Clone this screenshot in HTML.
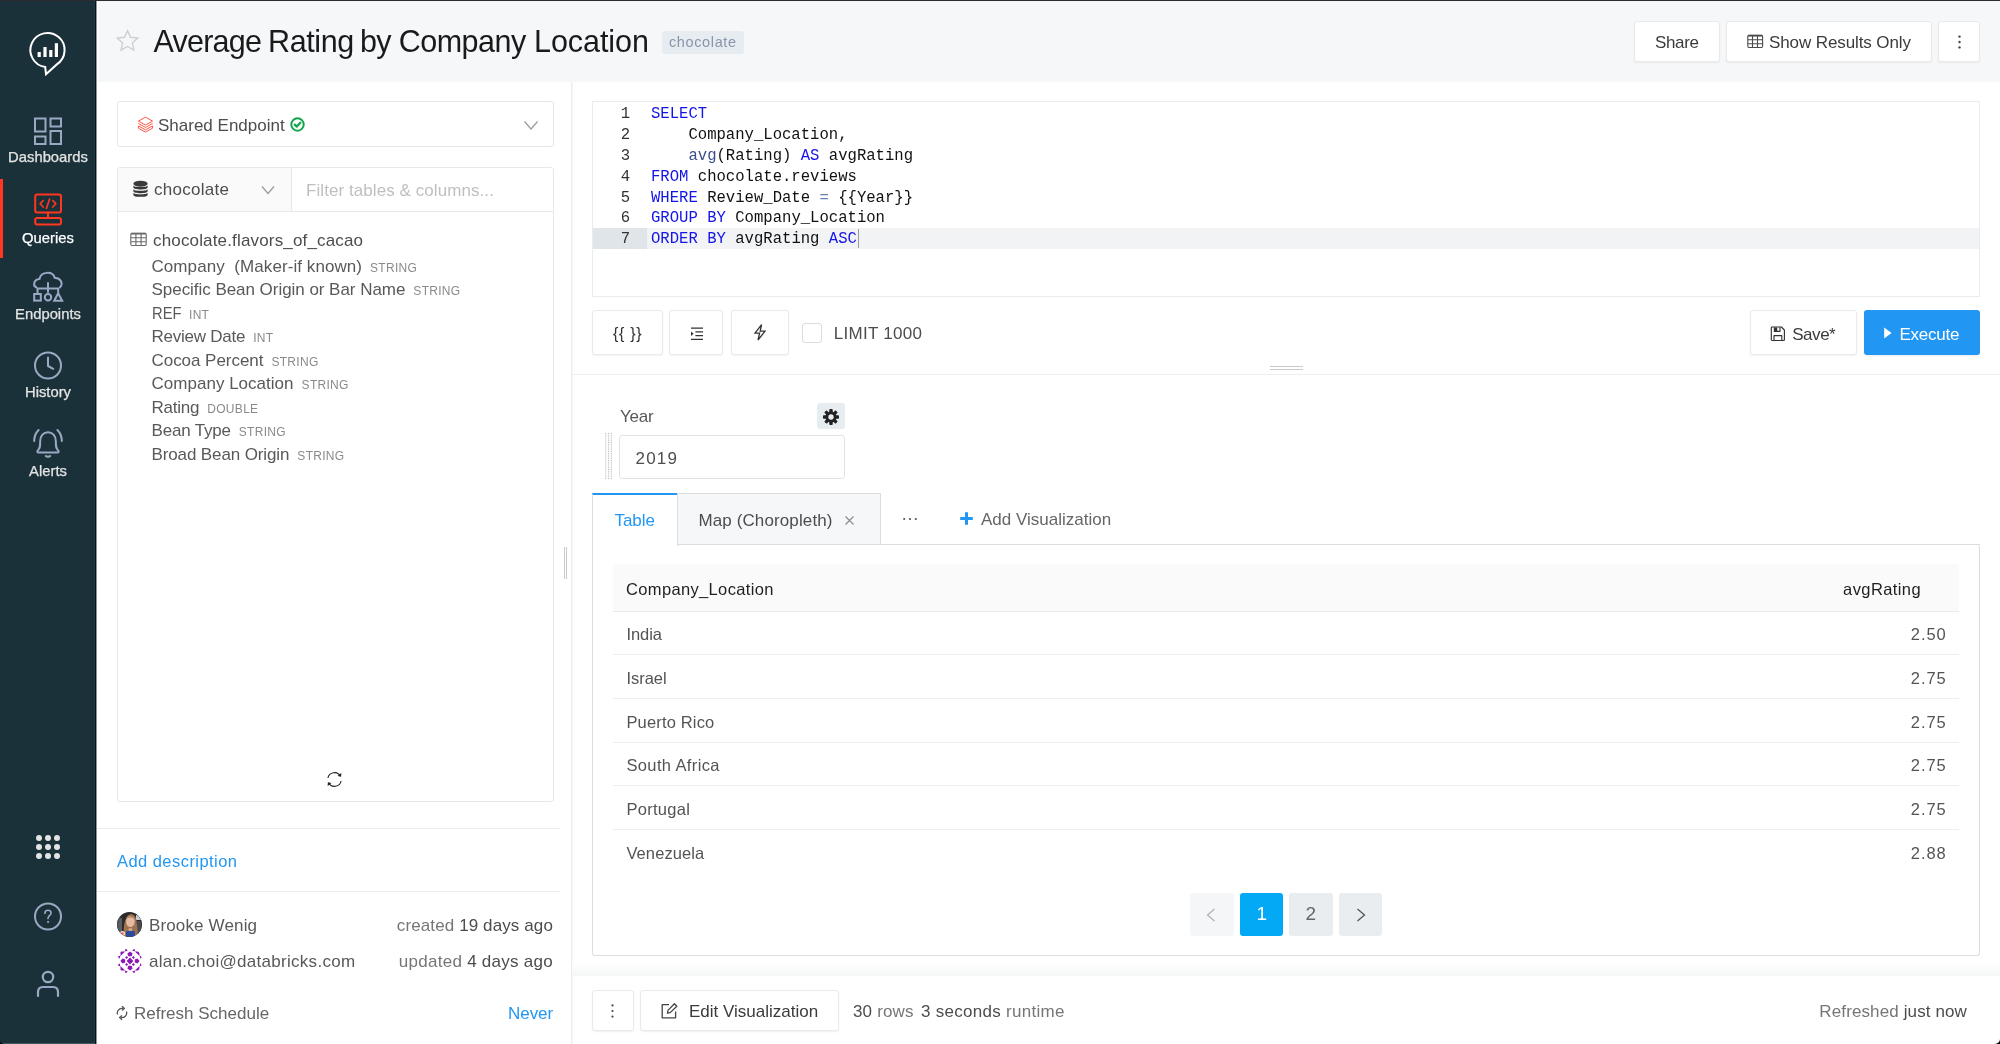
<!DOCTYPE html>
<html>
<head>
<meta charset="utf-8">
<title>Average Rating by Company Location</title>
<style>
*{box-sizing:border-box;margin:0;padding:0}
html,body{width:2000px;height:1044px;overflow:hidden;background:#fff}
body{will-change:transform;font-family:"Liberation Sans",sans-serif;color:#595959;position:relative;font-size:16px}
.abs{position:absolute}
.t{position:absolute;white-space:nowrap;line-height:1}
/* sidebar */
#side{position:absolute;left:0;top:0;width:97px;height:1044px;background:linear-gradient(90deg,#1b3139 0 94px,#23383f 94px 95px,#04121f 95px 96.4px,#8d979c 96.4px 97px)}
#side .lbl{position:absolute;left:0;width:96px;text-align:center;font-size:14.8px;-webkit-text-stroke:.25px currentColor;line-height:1;color:#e4e4e4;white-space:nowrap}
#topline{position:absolute;left:0;top:0;width:2000px;height:1px;background:#2b2d33;z-index:50}
/* header */
#hdr{position:absolute;left:98px;top:0;width:1902px;height:82px;background:#f6f7f9}
.btn{position:absolute;background:#fff;border:1px solid #eaeaea;border-radius:3px;box-shadow:0 1px 2px rgba(0,0,0,.06);color:#3b3b3b}
/* left */
.box{position:absolute;border:1px solid #e8e8e8;border-radius:3px;background:#fff}
.col{position:absolute;left:151.5px;font-size:17px;line-height:1;color:#595959;white-space:nowrap}
.col i{font-style:normal;font-size:12px;color:#8a8a8a;margin-left:8px;letter-spacing:.3px}
.hl{position:absolute;height:1px;background:#ececec}
/* editor */
.ln{position:absolute;left:593px;width:37px;text-align:right;font-family:"Liberation Mono",monospace;font-size:15.6px;line-height:21px;color:#333}
.cl{position:absolute;left:651px;font-family:"Liberation Mono",monospace;font-size:15.6px;line-height:21px;color:#111;white-space:pre}
.kw{color:#1414e6}
.fn{color:#3c4c8c}
.op{color:#687fb8}
/* table */
.tw{font-size:30.5px;color:#1a1a1a}
.ra,.rb{font-size:16.5px;color:#545454}
.row{position:absolute;left:613px;width:1346px;height:44px;border-bottom:1px solid #ebebeb}
.row .a{position:absolute;left:13px;top:13px;font-size:16px;line-height:1;color:#555;white-space:nowrap}
.row .b{position:absolute;right:13px;top:13px;font-size:16px;line-height:1;color:#555;white-space:nowrap}
</style>
</head>
<body>
<!-- HEADER -->
<div id="hdr"></div>
<svg class="abs" style="left:114px;top:27px" width="27" height="27" viewBox="0 0 27 27" fill="none"><path d="M13.5 3.6 L16.5 10.3 L23.8 11.1 L18.4 16 L19.9 23.2 L13.5 19.5 L7.1 23.2 L8.6 16 L3.2 11.1 L10.5 10.3 Z" stroke="#cfcfcf" stroke-width="1.4" stroke-linejoin="miter"/></svg>
<div class="t tw" id="tw1" style="left:153.6px;top:26px;letter-spacing:-0.8px">Average</div><div class="t tw" id="tw2" style="left:268px;top:26px;letter-spacing:-0.38px">Rating</div><div class="t tw" id="tw3" style="left:360px;top:26px;letter-spacing:-0.7px">by</div><div class="t tw" id="tw4" style="left:398.7px;top:26px;letter-spacing:-0.5px">Company</div><div class="t tw" id="tw5" style="left:534px;top:26px;letter-spacing:-0.05px">Location</div>
<div class="abs" style="left:662px;top:31px;width:82px;height:23px;background:#e7ecf1;border-radius:3px"></div>
<div class="t" id="tag" style="left:669px;top:35px;font-size:14.5px;color:#8795ab;letter-spacing:0.62px">chocolate</div>
<div class="btn" style="left:1634px;top:21px;width:86px;height:41px"></div>
<div class="t" id="share" style="left:1655px;top:34px;font-size:17px;color:#3b3b3b;letter-spacing:-0.34px">Share</div>
<div class="btn" style="left:1726px;top:21px;width:206px;height:41px"></div>
<svg class="abs" style="left:1747px;top:34px" width="17" height="15" viewBox="0 0 17 15" fill="none" stroke="#4a4a4a" stroke-width="1.1"><rect x=".8" y="1.3" width="14.8" height="12.2" rx="1.2"/><path d="M.8 5.8H15.6M.8 9.7H15.6M5.5 1.3V13.5M10.5 1.3V13.5"/><path d="M1 1.7H15.4" stroke-width="1.7"/></svg>
<div class="t" id="sro" style="left:1769px;top:34px;font-size:17px;color:#3b3b3b;letter-spacing:-0.1px">Show Results Only</div>
<div class="btn" style="left:1938px;top:21px;width:42px;height:41px"></div>
<svg class="abs" style="left:1957px;top:34px" width="5" height="16" viewBox="0 0 5 16" fill="#444"><circle cx="2.5" cy="2.6" r="1.2"/><circle cx="2.5" cy="8" r="1.2"/><circle cx="2.5" cy="13.4" r="1.2"/></svg>
<!-- LEFT PANEL -->
<div class="abs" style="left:571px;top:82px;width:1px;height:962px;background:#ececee"></div><div class="abs" style="left:572px;top:82px;width:1px;height:962px;background:#f7f7f8"></div>
<div class="box" style="left:117px;top:101px;width:437px;height:46px"></div>
<svg class="abs" style="left:137px;top:116px" width="17" height="17" viewBox="0 0 17 17" fill="none" stroke="#ff5a47" stroke-width="1" stroke-linejoin="round"><path d="M8.5 1.2 L15.6 5.1 L8.5 9 L1.4 5.1 Z"/><path d="M1.4 7.5 L8.5 11.4 L15.6 7.5 M1.4 9.9 L8.5 13.8 L15.6 9.9 M1.4 12.2 L8.5 16.1 L15.6 12.2 M1.4 9.9V12.2 M15.6 9.9V12.2"/></svg>
<div class="t" id="sep" style="left:158px;top:117px;font-size:17px;color:#4d4d4d">Shared Endpoint</div>
<svg class="abs" style="left:289px;top:116px" width="17" height="17" viewBox="0 0 17 17" fill="none" stroke="#10a54a" stroke-width="2" stroke-linecap="round" stroke-linejoin="round"><circle cx="8.5" cy="8.5" r="6.2"/><path d="M5.8 8.6 L7.8 10.6 L11.3 6.7" stroke-width="2.2"/></svg>
<svg class="abs" style="left:522px;top:118px" width="18" height="14" viewBox="0 0 18 14" fill="none" stroke="#9a9a9a" stroke-width="1.2"><path d="M2.5 3.5 L9 11 L15.5 3.5"/></svg>
<div class="box" style="left:117px;top:167px;width:437px;height:635px"></div>
<div class="abs" style="left:118px;top:168px;width:174px;height:43px;background:#fafafa;border-right:1px solid #e8e8e8"></div>
<div class="abs" style="left:118px;top:211px;width:435px;height:1px;background:#e8e8e8"></div>
<svg class="abs" style="left:132px;top:180px" width="17" height="18" viewBox="0 0 17 18" fill="#3a3a3a"><ellipse cx="8.5" cy="3.7" rx="7.1" ry="3"/><path d="M1.4 5.2 C1.4 7.7 15.6 7.7 15.6 5.2 V7.5 C15.6 10.1 1.4 10.1 1.4 7.5 Z M1.4 8.9 C1.4 11.4 15.6 11.4 15.6 8.9 V11.2 C15.6 13.8 1.4 13.8 1.4 11.2 Z M1.4 12.6 C1.4 15.1 15.6 15.1 15.6 12.6 V14.9 C15.6 17.5 1.4 17.5 1.4 14.9 Z"/></svg>
<div class="t" id="choc" style="left:154px;top:181px;font-size:17px;color:#4d4d4d;letter-spacing:0.28px">chocolate</div>
<svg class="abs" style="left:259px;top:183px" width="18" height="14" viewBox="0 0 18 14" fill="none" stroke="#9a9a9a" stroke-width="1.2"><path d="M3 3.5 L9 10.5 L15 3.5"/></svg>
<div class="t" id="filt" style="left:306px;top:182px;font-size:17px;color:#bfbfbf;letter-spacing:0.07px">Filter tables &amp; columns...</div>
<svg class="abs" style="left:130px;top:232px" width="17" height="15" viewBox="0 0 17 15" fill="none" stroke="#6a6a6a" stroke-width="1.1"><rect x=".8" y="1.3" width="15.4" height="12.2" rx="1.2"/><path d="M.8 5.8H16.2M.8 9.7H16.2M5.9 1.3V13.5M11.1 1.3V13.5"/><path d="M1 1.7H16" stroke-width="1.7"/></svg>
<div class="t" id="tbl" style="left:153px;top:232px;font-size:17px;color:#4d4d4d;letter-spacing:0.16px">chocolate.flavors_of_cacao</div>
<div class="col" style="top:258px"><span style="letter-spacing:0.07px">Company&nbsp; (Maker-if known)</span><i>STRING</i></div>
<div class="col" style="top:281px"><span style="letter-spacing:-0.04px">Specific Bean Origin or Bar Name</span><i>STRING</i></div>
<div class="col" style="top:305px"><span style="display:inline-block;transform:scaleX(.868);transform-origin:0 50%;margin-right:-4.5px">REF</span><i>INT</i></div>
<div class="col" style="top:328px"><span style="letter-spacing:-0.24px">Review Date</span><i>INT</i></div>
<div class="col" style="top:352px"><span style="letter-spacing:-0.04px">Cocoa Percent</span><i>STRING</i></div>
<div class="col" style="top:375px"><span style="letter-spacing:0.02px">Company Location</span><i>STRING</i></div>
<div class="col" style="top:399px"><span style="letter-spacing:-0.23px">Rating</span><i>DOUBLE</i></div>
<div class="col" style="top:422px"><span style="letter-spacing:-0.19px">Bean Type</span><i>STRING</i></div>
<div class="col" style="top:446px"><span style="letter-spacing:-0.12px">Broad Bean Origin</span><i>STRING</i></div>
<svg class="abs" style="left:325px;top:770px" width="19" height="19" viewBox="0 0 19 19" fill="none" stroke="#222" stroke-width="1.1"><path d="M2.9 8 A6.7 6.7 0 0 1 15.4 6.2 M16.1 11 A6.7 6.7 0 0 1 3.6 12.8"/><path d="M16.2 3.4 L15.8 6.6 L12.8 5.6 Z M2.8 15.6 L3.2 12.4 L6.2 13.4 Z" fill="#222" stroke-width=".4"/></svg>
<div class="hl" style="left:97px;top:828px;width:463px"></div>
<div class="t" id="adddesc" style="left:117px;top:853px;font-size:16.5px;color:#2196f3;letter-spacing:0.45px">Add description</div>
<div class="hl" style="left:97px;top:891px;width:463px"></div>
<div class="abs" style="left:116.8px;top:911.8px;width:25.4px;height:25.4px;border-radius:50%;overflow:hidden"><svg style="display:block;margin:-.3px 0 0 -.3px" width="26" height="26" viewBox="0 0 26 26"><g><rect width="26" height="26" fill="#2a2a2c"/><rect x="0" y="6" width="5" height="14" fill="#5b5d62"/><rect x="19" y="3" width="5" height="5" fill="#c9ccd2"/><rect x="20" y="9" width="4" height="14" fill="#4a4a4e"/><path d="M7.4 26 C5.8 18 7 7 11.4 3 C15 1 19 3.4 19.6 9 C20 15 21.6 20 20.2 26 Z" fill="#9c7250"/><ellipse cx="13.4" cy="9.6" rx="4.3" ry="5.4" fill="#e6b9a2"/><path d="M9.8 6.5 C11 3 16 3 17.2 7 C15 5.5 12 5.4 9.8 6.5Z" fill="#c08f6a"/><path d="M9 26 V20 C10.5 17.6 16.5 17.6 18 20 V26 Z" fill="#2b4a9c"/><path d="M11.6 16.2 H15.2 V19 H11.6 Z" fill="#dca58c"/><circle cx="5.4" cy="21.6" r="2.6" fill="#f3e6e2"/><circle cx="5.4" cy="21.6" r="1.3" fill="#e8604f"/></g><circle cx="13" cy="13" r="12.4" fill="none" stroke="#3a3a3c" stroke-opacity=".55" stroke-width=".8"/></svg></div>
<div class="t" id="bw" style="left:149px;top:917px;font-size:17px;color:#595959;letter-spacing:0.14px">Brooke Wenig</div>
<div class="t" id="cr" style="right:1447px;top:917px;font-size:17px;color:#767676;letter-spacing:0.11px">created <span style="color:#4d4d4d">19 days ago</span></div>
<div class="abs" style="left:116.7px;top:948.2px;width:25.6px;height:25.6px;border-radius:50%;overflow:hidden"><svg style="display:block;margin:-.2px 0 0 -.2px" width="26" height="26" viewBox="0 0 26 26"><g fill="#8a17b6"><rect width="26" height="26" fill="#fff"/><path d="M13 9.6 L16.4 13 L13 16.4 L9.6 13 Z"/><path d="M9.6 8.1 l1.5 1.5 l-1.5 1.5 l-1.5 -1.5 Z"/><path d="M16.4 8.1 l1.5 1.5 l-1.5 1.5 l-1.5 -1.5 Z"/><path d="M9.6 14.9 l1.5 1.5 l-1.5 1.5 l-1.5 -1.5 Z"/><path d="M16.4 14.9 l1.5 1.5 l-1.5 1.5 l-1.5 -1.5 Z"/><path d="M13 3.4 l2.6 2.2 l-1 2.6 h-3.2 l-1 -2.6 Z"/><path d="M13 22.6 l2.6 -2.2 l-1 -2.6 h-3.2 l-1 2.6 Z"/><path d="M3.4 13 l2.2 -2.6 l2.6 1 v3.2 l-2.6 1 Z"/><path d="M22.6 13 l-2.2 -2.6 l-2.6 1 v3.2 l2.6 1 Z"/><path d="M3.5 3.5 h4.6 l-4.6 4.6 Z M22.5 3.5 h-4.6 l4.6 4.6 Z M3.5 22.5 h4.6 l-4.6 -4.6 Z M22.5 22.5 h-4.6 l4.6 -4.6 Z"/><path d="M8.6 0.6 l2.2 2 l-3 .8 Z M17.4 0.6 l-2.2 2 l3 .8 Z M8.6 25.4 l2.2 -2 l-3 -.8 Z M17.4 25.4 l-2.2 -2 l3 -.8 Z M0.6 8.6 l2 2.2 l.8 -3 Z M0.6 17.4 l2 -2.2 l.8 3 Z M25.4 8.6 l-2 2.2 l-.8 -3 Z M25.4 17.4 l-2 -2.2 l-.8 3 Z"/></g></svg></div>
<div class="t" id="ac" style="left:149px;top:953px;font-size:17px;color:#595959;letter-spacing:0.28px">alan.choi@databricks.com</div>
<div class="t" id="up" style="right:1447px;top:953px;font-size:17px;color:#767676;letter-spacing:0.27px">updated <span style="color:#4d4d4d">4 days ago</span></div>
<svg class="abs" style="left:115px;top:1005px" width="14" height="16" viewBox="0 0 14 16" fill="none" stroke="#555" stroke-width="1.3"><path d="M2.6 9.6 A4.6 4.6 0 0 1 7 3.4 H8 M11.4 6.4 A4.6 4.6 0 0 1 7 12.6 H6"/><path d="M7 1.2 L9.4 3.4 L7 5.6 M7 10.4 L4.6 12.6 L7 14.8" stroke-linejoin="round"/></svg>
<div class="t" id="rs" style="left:134px;top:1005px;font-size:17px;color:#666">Refresh Schedule</div>
<div class="t" id="never" style="right:1447px;top:1005px;font-size:17px;color:#2196f3;letter-spacing:-0.09px">Never</div>
<div class="abs" style="left:564px;top:547px;width:1px;height:32px;background:#c9c9c9"></div><div class="abs" style="left:566px;top:547px;width:1px;height:32px;background:#c9c9c9"></div>
<!-- EDITOR -->
<div class="abs" style="left:592px;top:101px;width:1388px;height:196px;border:1px solid #e6ecf0;background:#fff"></div>
<div class="abs" style="left:593px;top:228px;width:54px;height:21px;background:#dfe5e8"></div>
<div class="abs" style="left:647px;top:228px;width:1332px;height:21px;background:#f2f3f5"></div>
<div class="abs" style="left:858px;top:229px;width:1px;height:19px;background:#9a9a9a"></div>
<div class="ln" style="top:104px">1</div><div class="cl" style="top:104px"><span class="kw">SELECT</span></div>
<div class="ln" style="top:125px">2</div><div class="cl" style="top:125px">    Company_Location,</div>
<div class="ln" style="top:146px">3</div><div class="cl" style="top:146px">    <span class="fn">avg</span>(Rating) <span class="kw">AS</span> avgRating</div>
<div class="ln" style="top:167px">4</div><div class="cl" style="top:167px"><span class="kw">FROM</span> chocolate.reviews</div>
<div class="ln" style="top:188px">5</div><div class="cl" style="top:188px"><span class="kw">WHERE</span> Review_Date <span class="op">=</span> {{Year}}</div>
<div class="ln" style="top:208px">6</div><div class="cl" style="top:208px"><span class="kw">GROUP</span> <span class="kw">BY</span> Company_Location</div>
<div class="ln" style="top:229px">7</div><div class="cl" style="top:229px"><span class="kw">ORDER</span> <span class="kw">BY</span> avgRating <span class="kw">ASC</span></div>
<!-- TOOLBAR -->
<div class="btn" style="left:592px;top:310px;width:71px;height:45px"></div>
<div class="t" id="braces" style="left:613px;top:325.5px;font-size:16px;color:#333;letter-spacing:0.67px">{{&nbsp;}}</div>
<div class="btn" style="left:669px;top:310px;width:54px;height:45px"></div>
<svg class="abs" style="left:689.5px;top:327px" width="14" height="14" viewBox="0 0 14 14" fill="none" stroke="#333" stroke-width="1.2"><path d="M1 1.2H13M5.4 4.9H13M5.4 8.6H13M1 12.3H13"/><path d="M1 4.6 L3.6 6.75 L1 8.9 Z" fill="#333" stroke="none"/></svg>
<div class="btn" style="left:731px;top:310px;width:58px;height:45px"></div>
<svg class="abs" style="left:752px;top:323px" width="16" height="19" viewBox="0 0 16 19" fill="none" stroke="#333" stroke-width="1.3" stroke-linejoin="miter"><path d="M9.6 1.6 L3 10.2 H7.6 L6 17 L13 8.2 H8.2 Z"/></svg>
<div class="abs" style="left:802px;top:323px;width:20px;height:20px;border:1px solid #dcdcdc;border-radius:3px;background:#fff"></div>
<div class="t" id="limit" style="left:833.75px;top:325px;font-size:17px;color:#4d4d4d;letter-spacing:0.28px">LIMIT 1000</div>
<div class="btn" style="left:1750px;top:310px;width:107px;height:45px"></div>
<svg class="abs" style="left:1769px;top:325px" width="18" height="18" viewBox="0 0 18 18" fill="none" stroke="#333" stroke-width="1.15" stroke-linejoin="round"><path d="M3.2 2 H12.4 L15.4 5 V14.6 A.9 .9 0 0 1 14.5 15.5 H3.2 A.9 .9 0 0 1 2.3 14.6 V2.9 A.9 .9 0 0 1 3.2 2 Z"/><path d="M5 15.4 V10.6 H12.8 V15.4"/><path d="M5.4 2.2 V6.4 H11 V2.2"/><path d="M6.4 2.4V6.2 M7.6 2.4V6.2" stroke-width="1.3"/></svg>
<div class="t" id="save" style="left:1792.25px;top:326px;font-size:17px;color:#3b3b3b;letter-spacing:-0.47px">Save*</div>
<div class="abs" style="left:1864px;top:310px;width:116px;height:45px;background:#2196f3;border-radius:3px;box-shadow:0 1px 2px rgba(0,0,0,.08)"></div>
<svg class="abs" style="left:1883px;top:326px" width="10" height="14" viewBox="0 0 10 14"><path d="M1.2 1.6 L8.6 7 L1.2 12.4 Z" fill="#fff"/></svg>
<div class="t" id="exec" style="left:1899.5px;top:326px;font-size:17px;color:#fff;letter-spacing:-0.24px">Execute</div>
<div class="abs" style="left:1270px;top:366px;width:33px;height:1px;background:#c9c9c9"></div>
<div class="abs" style="left:1270px;top:369px;width:33px;height:1px;background:#c9c9c9"></div>
<div class="hl" style="left:572px;top:374px;width:1428px;background:#efefef"></div>
<!-- PARAMS -->
<div class="t" id="year" style="left:620px;top:408px;font-size:17px;color:#595959;letter-spacing:-0.2px">Year</div>
<div class="abs" style="left:817px;top:403px;width:28px;height:26px;background:#e7ecf1;border-radius:3px"></div>
<svg class="abs" style="left:822px;top:408px" width="18" height="18" viewBox="0 0 18 18"><g fill="#222"><circle cx="9" cy="9" r="5.6"/><g id="tooth"><rect x="7.3" y="1" width="3.4" height="16" rx=".8"/></g><rect x="7.3" y="1" width="3.4" height="16" rx=".8" transform="rotate(45 9 9)"/><rect x="7.3" y="1" width="3.4" height="16" rx=".8" transform="rotate(90 9 9)"/><rect x="7.3" y="1" width="3.4" height="16" rx=".8" transform="rotate(135 9 9)"/></g><circle cx="9" cy="9" r="2.7" fill="#e7ecf1"/></svg>
<svg class="abs" style="left:605px;top:433px" width="8" height="46" viewBox="0 0 8 46" stroke="#bdbdbd" stroke-width="1.1" stroke-dasharray="1 .8"><path d="M.8 0V46M3.6 0V46M6.4 0V46"/></svg>
<div class="abs" style="left:619px;top:435px;width:226px;height:44px;border:1px solid #e2e2e2;border-radius:3px;background:#fff"></div>
<div class="t" id="y2019" style="left:635.5px;top:450px;font-size:17px;color:#4d4d4d;letter-spacing:1.22px">2019</div>
<!-- TABS -->
<div class="abs" style="left:592px;top:545px;width:1388px;height:411px;border:1px solid #dddddd;border-top:none;border-radius:0 3px 3px 3px;background:#fff"></div>
<div class="abs" style="left:592px;top:544px;width:1388px;height:1px;background:#dddddd"></div>
<div class="abs" style="left:592px;top:493px;width:86px;height:53px;background:#fff;border-left:1px solid #dddddd;border-right:1px solid #dddddd;border-top:2px solid #2196f3"></div>
<div class="t" id="tabtable" style="left:614.4px;top:512px;font-size:17px;color:#2196f3">Table</div>
<div class="abs" style="left:677px;top:493px;width:204px;height:52px;background:#f6f7f9;border:1px solid #dddddd"></div>
<div class="t" id="tabmap" style="left:698.4px;top:512px;font-size:17px;color:#4d4d4d;letter-spacing:0.12px">Map (Choropleth)</div>
<svg class="abs" style="left:844px;top:515px" width="11" height="11" viewBox="0 0 11 11" stroke="#8a8a8a" stroke-width="1.1"><path d="M1.5 1.5 L9.5 9.5 M9.5 1.5 L1.5 9.5"/></svg>
<svg class="abs" style="left:901px;top:516px" width="18" height="6" viewBox="0 0 18 6" fill="#555"><circle cx="3.2" cy="3" r="1.1"/><circle cx="9" cy="3" r="1.1"/><circle cx="14.8" cy="3" r="1.1"/></svg>
<svg class="abs" style="left:959px;top:511px" width="15" height="15" viewBox="0 0 15 15" stroke="#2196f3" stroke-width="3"><path d="M7.5 1.2V13.8 M1.2 7.5H13.8"/></svg>
<div class="t" id="addviz" style="left:981px;top:511px;font-size:17px;color:#666">Add Visualization</div>
<!-- TABLE -->
<div class="abs" style="left:613px;top:564px;width:1346px;height:48px;background:#fafafa;border-bottom:1px solid #ebebeb"></div>
<div class="t" id="th1" style="left:626px;top:581px;font-size:16.5px;color:#1f1f1f;letter-spacing:0.35px">Company_Location</div>
<div class="t" id="th2" style="right:79px;top:581px;font-size:16.5px;color:#1f1f1f;letter-spacing:0.4px">avgRating</div>
<div class="hl" style="left:613px;top:654px;width:1346px;background:#eeeeee"></div>
<div class="hl" style="left:613px;top:698px;width:1346px;background:#eeeeee"></div>
<div class="hl" style="left:613px;top:742px;width:1346px;background:#eeeeee"></div>
<div class="hl" style="left:613px;top:785px;width:1346px;background:#eeeeee"></div>
<div class="hl" style="left:613px;top:829px;width:1346px;background:#eeeeee"></div>
<div class="t ra" id="r1a" style="left:626.4px;top:626px;letter-spacing:-0.05px">India</div><div class="t rb" id="r1b" style="left:1910.75px;top:626px;letter-spacing:0.96px">2.50</div>
<div class="t ra" id="r2a" style="left:626.4px;top:670px;letter-spacing:-0.03px">Israel</div><div class="t rb" id="r2b" style="left:1910.75px;top:670px;letter-spacing:0.96px">2.75</div>
<div class="t ra" id="r3a" style="left:626.4px;top:714px;letter-spacing:0.17px">Puerto Rico</div><div class="t rb" id="r3b" style="left:1910.75px;top:714px;letter-spacing:0.96px">2.75</div>
<div class="t ra" id="r4a" style="left:626.4px;top:757px;letter-spacing:0.38px">South Africa</div><div class="t rb" id="r4b" style="left:1910.75px;top:757px;letter-spacing:0.96px">2.75</div>
<div class="t ra" id="r5a" style="left:626.4px;top:801px;letter-spacing:0.3px">Portugal</div><div class="t rb" id="r5b" style="left:1910.75px;top:801px;letter-spacing:0.96px">2.75</div>
<div class="t ra" id="r6a" style="left:626.4px;top:845px;letter-spacing:0.1px">Venezuela</div><div class="t rb" id="r6b" style="left:1910.75px;top:845px;letter-spacing:0.96px">2.88</div>
<!-- PAGINATION -->
<div class="abs" style="left:1190px;top:893px;width:44px;height:43px;background:#f4f6f8;border-radius:3px"></div>
<svg class="abs" style="left:1205px;top:907px" width="12" height="16" viewBox="0 0 12 16" fill="none" stroke="#b0b0b0" stroke-width="1.2"><path d="M9.5 2 L2.5 8 L9.5 14"/></svg>
<div class="abs" style="left:1240px;top:893px;width:43px;height:43px;background:#03a9f4;border-radius:3px"></div>
<div class="t" id="p1" style="left:1256.5px;top:904px;font-size:19px;color:#fff">1</div>
<div class="abs" style="left:1289px;top:893px;width:44px;height:43px;background:#e9edf0;border-radius:3px"></div>
<div class="t" id="p2" style="left:1305.5px;top:904px;font-size:19px;color:#666">2</div>
<div class="abs" style="left:1339px;top:893px;width:43px;height:43px;background:#e9edf0;border-radius:3px"></div>
<svg class="abs" style="left:1355px;top:907px" width="12" height="16" viewBox="0 0 12 16" fill="none" stroke="#555" stroke-width="1.3"><path d="M2.5 2 L9.5 8 L2.5 14"/></svg>
<!-- FOOTER -->
<div class="abs" style="left:572px;top:962px;width:1428px;height:14px;background:linear-gradient(#fff,#f5f6f7)"></div>
<div class="btn" style="left:592px;top:990px;width:42px;height:41px"></div>
<svg class="abs" style="left:610px;top:1003px" width="5" height="16" viewBox="0 0 5 16" fill="#444"><circle cx="2.5" cy="2.4" r="1.1"/><circle cx="2.5" cy="8" r="1.1"/><circle cx="2.5" cy="13.6" r="1.1"/></svg>
<div class="btn" style="left:640px;top:990px;width:199px;height:41px"></div>
<svg class="abs" style="left:660px;top:1002px" width="19" height="18" viewBox="0 0 19 18" fill="none" stroke="#444" stroke-width="1.3" stroke-linejoin="round"><path d="M15.6 9.4V15.8H2.2V2.6H9"/><path d="M7.4 11.2 L8 8.4 L14.4 1.8 L16.8 4.2 L10.2 10.6 Z"/></svg>
<div class="t" id="editviz" style="left:689px;top:1003px;font-size:17px;color:#3b3b3b">Edit Visualization</div>
<div class="t" id="rows30" style="left:853px;top:1003px;font-size:17px;color:#4d4d4d;letter-spacing:0.16px">30 <span style="color:#767676">rows</span></div>
<div class="t" id="runtime" style="left:921px;top:1003px;font-size:17px;color:#4d4d4d;letter-spacing:0.28px">3 seconds <span style="color:#767676">runtime</span></div>
<div class="t" id="refreshed" style="right:33px;top:1003px;font-size:17px;color:#767676;letter-spacing:0.12px">Refreshed <span style="color:#4d4d4d">just now</span></div>
<!-- window corners -->
<svg class="abs" style="left:1995px;top:1039px;z-index:60" width="5" height="5" viewBox="0 0 5 5"><path d="M5 0 V5 H0 A5 5 0 0 0 5 0 Z" fill="#000"/></svg>
<svg class="abs" style="left:0;top:1040px;z-index:60" width="4" height="4" viewBox="0 0 4 4"><path d="M0 0 V4 H4 A4 4 0 0 1 0 0 Z" fill="#000"/></svg><div class="abs" style="left:3px;top:1043px;width:92px;height:1px;background:#46565f;z-index:59"></div>
<!-- SIDEBAR -->
<div id="side">
<svg class="abs" style="left:0;top:0" width="97" height="1044" viewBox="0 0 97 1044" fill="none">
<!-- active bar -->
<rect x="0" y="179" width="3" height="79" fill="#ff3621"/>
<!-- logo -->
<g stroke="#fff" stroke-width="2" stroke-linejoin="miter">
<path d="M45.2 67 A17.1 17.1 0 1 1 56.8 64.4 L46 74.2 Z" fill="none"/>
</g>
<g fill="#fff">
<rect x="37.6" y="52" width="3.2" height="5"/>
<rect x="43.4" y="47" width="3.2" height="10"/>
<rect x="49.2" y="50" width="3.2" height="7"/>
<rect x="54.8" y="43.2" width="3.2" height="13.8"/>
</g>
<!-- dashboards -->
<g stroke="#98a9c3" stroke-width="2">
<rect x="35" y="118.5" width="10.5" height="13"/>
<rect x="50.5" y="118.5" width="10.5" height="8"/>
<rect x="35" y="136.5" width="10.5" height="7.5"/>
<rect x="50.5" y="131" width="10.5" height="13"/>
</g>
<!-- queries -->
<g stroke="#ff3621" stroke-width="2" stroke-linecap="round" stroke-linejoin="round">
<rect x="35.2" y="194.5" width="25.8" height="18" rx="2"/>
<path d="M48 212.5V218"/>
<rect x="35.2" y="218" width="25.8" height="6.5" rx="2"/>
<path d="M43.2 200.5 L40.2 203.7 L43.2 207 M52.8 200.5 L55.8 203.7 L52.8 207 M49.6 199 L46.4 208.5" stroke-width="1.7"/>
</g>
<!-- endpoints -->
<g stroke="#98a9c3" stroke-width="2" stroke-linecap="round" stroke-linejoin="round">
<path d="M36.5 287.5 C33 286.5 33 279.5 39.5 279 C41 271 53 271 54.8 278 C61 277.5 63.5 284 59.8 287.5"/>
<path d="M48 283V292 M37.5 292.5V288.5H58.2V292"/>
<rect x="34.2" y="294" width="6.6" height="6.6" stroke-linejoin="miter"/>
<circle cx="48" cy="297.2" r="3.2"/>
<path d="M58.2 293.2 L62.2 300.8 H54.2 Z" stroke-linejoin="miter"/>
</g>
<!-- history -->
<g stroke="#98a9c3" stroke-width="2" stroke-linecap="round" stroke-linejoin="round">
<circle cx="48" cy="365.5" r="13"/>
<path d="M48 357.5V366L53.2 368.8"/>
</g>
<!-- alerts -->
<g stroke="#98a9c3" stroke-width="2" stroke-linecap="round" stroke-linejoin="round">
<path d="M37.8 450.5 C40.2 448.5 40.2 446 40.2 441 C40.2 435.8 43.5 432.2 48 432.2 C52.5 432.2 55.8 435.8 55.8 441 C55.8 446 55.8 448.5 58.2 450.5 C59.2 451.5 58.6 452.6 57.4 452.6 H38.6 C37.4 452.6 36.8 451.5 37.8 450.5 Z"/>
<path d="M45.8 456 C46.8 457 49.2 457 50.2 456"/>
<path d="M38.6 430 C35.6 433 34.2 436.6 34.2 441 M57.4 430 C60.4 433 61.8 436.6 61.8 441"/>
</g>
<!-- app grid -->
<g fill="#e4e4e4">
<circle cx="39" cy="838" r="3"/><circle cx="48" cy="838" r="3"/><circle cx="57" cy="838" r="3"/>
<circle cx="39" cy="847" r="3"/><circle cx="48" cy="847" r="3"/><circle cx="57" cy="847" r="3"/>
<circle cx="39" cy="856" r="3"/><circle cx="48" cy="856" r="3"/><circle cx="57" cy="856" r="3"/>
</g>
<!-- help -->
<g stroke="#98a9c3" stroke-width="2" stroke-linecap="round" stroke-linejoin="round">
<circle cx="48" cy="916.5" r="13"/>
</g>
<!-- user -->
<g stroke="#98a9c3" stroke-width="2.2" stroke-linecap="round" stroke-linejoin="round">
<circle cx="48" cy="977" r="5.2"/>
<path d="M38 996 V992 C38 988.6 40.2 987 43 987 H53 C55.8 987 58 988.6 58 992 V996"/>
</g>
</svg>
<div class="lbl" id="l1" style="top:150px">Dashboards</div>
<div class="lbl" id="l2" style="top:231px;color:#fff">Queries</div>
<div class="lbl" id="l3" style="top:307px">Endpoints</div>
<div class="lbl" id="l4" style="top:385px">History</div>
<div class="lbl" id="l5" style="top:464px">Alerts</div>
<svg class="abs" style="left:40px;top:906px" width="16" height="22" viewBox="0 0 16 22" fill="none" stroke="#98a9c3" stroke-width="1.6" stroke-linecap="round"><path d="M4.9 7.4 C4.9 5.2 6.2 4.2 8 4.2 C9.8 4.2 11.1 5.3 11.1 7 C11.1 9.6 8 9.4 8 12.6"/><circle cx="8" cy="15.9" r=".6" fill="#98a9c3" stroke-width="1"/></svg>
</div>
<div id="topline"></div>
</body>
</html>
